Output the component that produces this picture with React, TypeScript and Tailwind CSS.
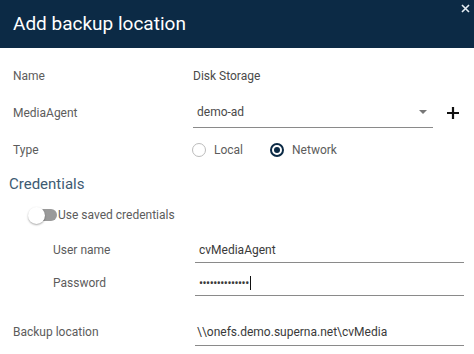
const labelCls = "text-[12px] text-[#5c5c5c]";

const Radio = ({ checked, label }: { checked?: boolean; label: string }) => (
  <div className="flex items-center">
    {checked ? (
      <span className="flex h-[14px] w-[14px] items-center justify-center rounded-full border-2 border-[#0b2a45]">
        <span className="h-[6px] w-[6px] rounded-full bg-[#0b2a45]" />
      </span>
    ) : (
      <span className="h-[14px] w-[14px] rounded-full border border-[#bbb]" />
    )}
    <span className="ml-[8px] text-[12px] text-[#5c5c5c]">{label}</span>
  </div>
);

const App = () => {
  return (
    <div className="h-[354px] w-[474px] overflow-hidden bg-white font-['Roboto',sans-serif]">
      <div className="relative flex h-[48px] items-center bg-[#0c2a45] pl-[13px]">
        <h1 className="text-[19px] text-white">Add backup location</h1>
        <svg className="absolute right-[4px] top-[4px]" width="9" height="9" viewBox="0 0 9 9">
          <path d="M1 1L8 8M8 1L1 8" stroke="#e6eef5" strokeWidth="1.6" />
        </svg>
      </div>

      <div className="flex h-[28px] items-center mt-[14px]">
        <div className={`w-[193px] pl-[13px] ${labelCls}`}>Name</div>
        <div className="text-[12px] text-[#4a4a4a]">Disk Storage</div>
      </div>

      <div className="mt-[7px] flex items-center">
        <div className={`w-[193px] pl-[13px] ${labelCls}`}>MediaAgent</div>
        <div className="flex h-[31px] w-[240px] items-center border-b border-[#8a8a8a] pl-[4px] pr-[6px]">
          <span className="flex-1 text-[12px] text-[#4a4a4a]">demo-ad</span>
          <span className="h-0 w-0 border-x-[4px] border-t-[4px] border-x-transparent border-t-[#777]" />
        </div>
        <svg className="ml-[14px]" width="12" height="12" viewBox="0 0 12 12">
          <path d="M6 0V12M0 6H12" stroke="#111" strokeWidth="2.2" />
        </svg>
      </div>

      <div className="mt-[10px] flex h-[24px] items-center">
        <div className={`w-[192px] pl-[13px] ${labelCls}`}>Type</div>
        <Radio label="Local" />
        <div className="ml-[27px]">
          <Radio checked label="Network" />
        </div>
      </div>

      <div className="mt-[11px] flex h-[22px] items-center pl-[9px] text-[15px] text-[#3d5a72]">Credentials</div>

      <div className="mt-[8px] flex h-[24px] items-center pl-[28px]">
        <div className="relative h-[16px] w-[30px]">
          <span className="absolute left-[8px] top-[2px] h-[12px] w-[21px] rounded-full bg-[#9a9a9a]" />
          <span className="absolute left-0 top-0 h-[17px] w-[17px] rounded-full bg-white shadow-[0_1px_2px_rgba(0,0,0,0.35)]" />
        </div>
        <span className="text-[12px] text-[#5c5c5c]">Use saved credentials</span>
      </div>

      <div className="mt-[10px] flex items-center">
        <div className={`w-[195px] pl-[53px] ${labelCls}`}>User name</div>
        <div className="flex h-[26px] w-[269px] items-center border-b border-[#8a8a8a] pl-[4px] text-[12px] text-[#3a3a3a]">
          cvMediaAgent
        </div>
      </div>

      <div className="mt-[7px] flex items-center">
        <div className={`w-[195px] pl-[53px] ${labelCls}`}>Password</div>
        <div className="flex h-[26px] w-[269px] items-center border-b border-[#8a8a8a] pl-[4px] text-[12px] text-[#3a3a3a]">
          <span className="tracking-[-0.5px]">••••••••••••••</span>
          <span className="ml-[1px] h-[14px] w-[1px] bg-[#111]" />
        </div>
      </div>

      <div className="mt-[22px] flex items-center">
        <div className={`w-[195px] pl-[13px] ${labelCls}`}>Backup location</div>
        <div className="flex h-[28px] w-[269px] items-center border-b border-[#8a8a8a] pl-[2px] text-[12px] text-[#3a3a3a]">
          {"\\\\onefs.demo.superna.net\\cvMedia"}
        </div>
      </div>
    </div>
  );
};

export default App;
